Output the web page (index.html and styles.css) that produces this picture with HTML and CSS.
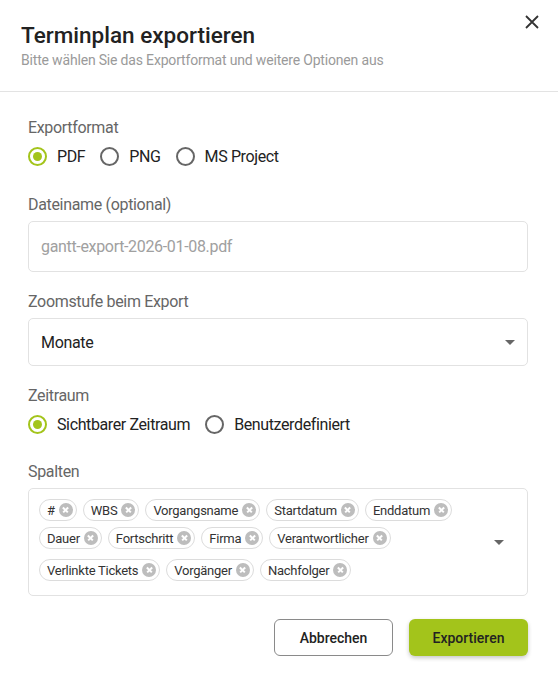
FILE: index.html
```html
<!DOCTYPE html>
<html lang="de">
<head>
<meta charset="utf-8">
<title>Terminplan exportieren</title>
<link rel="stylesheet" href="styles.css">
</head>
<body>
<div class="dialog">
  <header class="header">
    <h1 class="title">Terminplan exportieren</h1>
    <p class="subtitle">Bitte wählen Sie das Exportformat und weitere Optionen aus</p>
    <button class="close" aria-label="Schließen">
      <svg width="14" height="14" viewBox="0 0 14 14"><path d="M1 1L13 13M13 1L1 13" stroke="#333" stroke-width="1.8" fill="none"/></svg>
    </button>
  </header>
  <div class="body">
    <div class="label lbl-first">Exportformat</div>
    <div class="radios">
      <label class="radio"><span class="circle on"></span>PDF</label>
      <label class="radio"><span class="circle"></span>PNG</label>
      <label class="radio"><span class="circle"></span>MS Project</label>
    </div>

    <div class="label lbl-file">Dateiname (optional)</div>
    <div class="field field-input"><span class="placeholder">gantt-export-2026-01-08.pdf</span></div>

    <div class="label lbl-zoom">Zoomstufe beim Export</div>
    <div class="field field-select"><span class="value">Monate</span><span class="caret"></span></div>

    <div class="label lbl-zeit">Zeitraum</div>
    <div class="radios">
      <label class="radio"><span class="circle on"></span>Sichtbarer Zeitraum</label>
      <label class="radio"><span class="circle"></span>Benutzerdefiniert</label>
    </div>

    <div class="label lbl-spalten">Spalten</div>
    <div class="chipbox">
      <div class="chips">
        <span class="chip">#<i class="del"></i></span>
        <span class="chip">WBS<i class="del"></i></span>
        <span class="chip">Vorgangsname<i class="del"></i></span>
        <span class="chip">Startdatum<i class="del"></i></span>
        <span class="chip">Enddatum<i class="del"></i></span>
        <span class="chip">Dauer<i class="del"></i></span>
        <span class="chip">Fortschritt<i class="del"></i></span>
        <span class="chip">Firma<i class="del"></i></span>
        <span class="chip">Verantwortlicher<i class="del"></i></span>
        <span class="chip">Verlinkte Tickets<i class="del"></i></span>
        <span class="chip">Vorgänger<i class="del"></i></span>
        <span class="chip">Nachfolger<i class="del"></i></span>
        <span class="chip-input"></span>
      </div>
      <span class="caret caret-chips"></span>
    </div>

    <div class="actions">
      <button class="btn btn-outline">Abbrechen</button>
      <button class="btn btn-primary">Exportieren</button>
    </div>
  </div>
</div>
</body>
</html>
```
FILE: styles.css
```css
* { box-sizing: border-box; }
html, body { margin: 0; padding: 0; background: #fff; }
body { font-family: Roboto, "Liberation Sans", Arial, sans-serif; color: #222; }

.dialog { width: 558px; height: 684px; background: #fff; }

.header {
  position: relative;
  padding: 20px 60px 21px 21px;
  border-bottom: 1px solid #e3e3e3;
}
.title {
  margin: 0;
  font-size: 22.5px;
  line-height: 30px;
  font-weight: 500;
  color: #222;
}
.subtitle {
  margin: 0;
  font-size: 14px;
  line-height: 20px;
  color: #9a9a9a;
  letter-spacing: -0.18px;
}
.close {
  position: absolute;
  top: 13px;
  right: 17px;
  width: 18px;
  height: 18px;
  padding: 2px;
  border: 0;
  background: none;
  display: flex;
  align-items: center;
  justify-content: center;
}

.body { padding: 0 30px 0 28px; }

.label {
  font-size: 16px;
  line-height: 24px;
  color: #666;
  letter-spacing: -0.33px;
}
.lbl-first { margin-top: 24px; }
.lbl-file { margin-top: 21px; margin-bottom: 4px; }
.lbl-zoom { margin-top: 18px; margin-bottom: 4px; }
.lbl-zeit { margin-top: 18px; }
.lbl-spalten { margin-top: 20px; margin-bottom: 4px; }

.radios {
  display: flex;
  align-items: center;
  gap: 15px;
  height: 32px;
}
.radio {
  display: inline-flex;
  align-items: center;
  font-size: 16px;
  color: #222;
  letter-spacing: -0.38px;
}
.circle {
  width: 19px;
  height: 19px;
  border: 2px solid #666;
  border-radius: 50%;
  margin-right: 10px;
  display: inline-flex;
  align-items: center;
  justify-content: center;
}
.circle.on { border-color: #a3c41b; }
.circle.on::after {
  content: "";
  width: 9px;
  height: 9px;
  border-radius: 50%;
  background: #a3c41b;
}

.field {
  border: 1px solid #e2e2e2;
  border-radius: 5px;
  display: flex;
  align-items: center;
  padding: 0 12px;
  font-size: 16px;
  letter-spacing: -0.33px;
}
.field-input { height: 51px; }
.placeholder { color: #a0a0a0; }
.field-select { height: 48px; justify-content: space-between; }
.value { color: #222; }
.caret {
  width: 0;
  height: 0;
  border-left: 5px solid transparent;
  border-right: 5px solid transparent;
  border-top: 5px solid #666;
}

.chipbox {
  position: relative;
  border: 1px solid #e2e2e2;
  border-radius: 5px;
  padding: 7px 56px 7px 7px;
}
.chips {
  display: flex;
  flex-wrap: wrap;
  align-items: center;
}
.chip {
  display: inline-flex;
  align-items: center;
  height: 22px;
  margin: 3px;
  padding: 0 3px 0 7px;
  border: 1px solid #dcdcdc;
  border-radius: 11px;
  font-size: 13px;
  color: #333;
  white-space: nowrap;
  letter-spacing: -0.25px;
}
.del {
  position: relative;
  width: 14px;
  height: 14px;
  margin-left: 4px;
  border-radius: 50%;
  background: #bdbdbd;
}
.del::before, .del::after {
  content: "";
  position: absolute;
  left: 3.5px;
  top: 6.25px;
  width: 7px;
  height: 1.5px;
  background: #fff;
  transform: rotate(45deg);
}
.del::after { transform: rotate(-45deg); }
.chip-input {
  flex: 1 0 30px;
  height: 36px;
}
.caret-chips {
  position: absolute;
  right: 23px;
  top: 50%;
  margin-top: -2px;
}

.actions {
  display: flex;
  justify-content: flex-end;
  gap: 16px;
  margin-top: 23px;
}
.btn {
  width: 119px;
  height: 37px;
  border-radius: 6px;
  font-family: Roboto, "Liberation Sans", Arial, sans-serif;
  font-size: 14px;
  font-weight: 500;
  color: #222;
}
.btn-outline {
  background: #fff;
  border: 1px solid #8a8a8a;
}
.btn-primary {
  background: #a3c41b;
  border: 0;
  box-shadow: 0 2px 4px rgba(0,0,0,0.22);
}
```
